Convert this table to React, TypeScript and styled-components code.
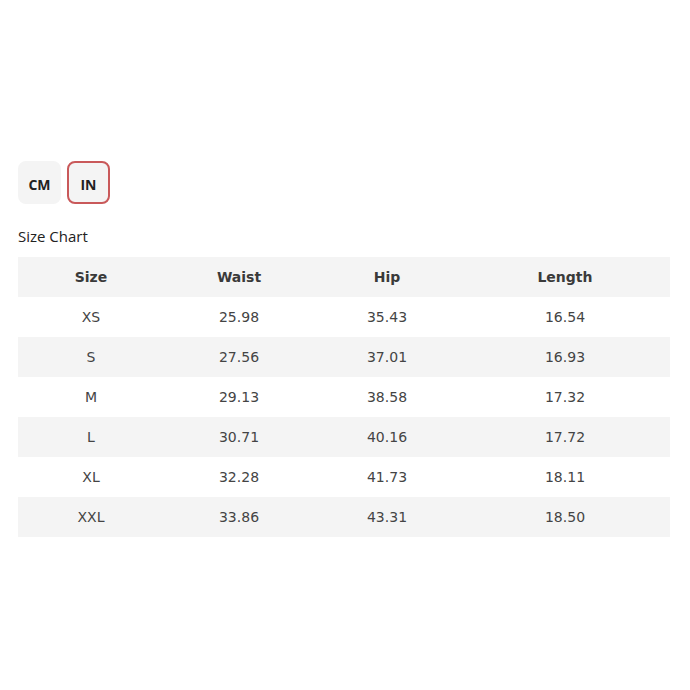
import React from "react";
import styled, { createGlobalStyle } from "styled-components";

const Global = createGlobalStyle`
  html, body { margin: 0; padding: 0; background: #fff; }
`;

const Page = styled.div`
  padding: 161px 20px 0 18px;
  width: 690px;
  box-sizing: border-box;
`;

const UnitRow = styled.div`
  display: flex;
  gap: 6px;
`;

const UnitButton = styled.button<{ $active?: boolean }>`
  width: 43px;
  height: 43px;
  box-sizing: border-box;
  border-radius: 8px;
  border: 2px solid ${(p) => (p.$active ? "#c9595a" : "#f4f4f4")};
  background: #f4f4f4;
  font-family: "Open Sans", sans-serif;
  font-weight: 700;
  font-size: 14px;
  color: #222;
  padding: 3px 0 0;
  display: flex;
  align-items: center;
  justify-content: center;
`;

const Title = styled.div`
  margin-top: 21px;
  font-family: "Open Sans", sans-serif;
  font-size: 15px;
  color: #222;
  line-height: 22px;
  height: 22px;
`;

const Table = styled.div`
  margin-top: 10px;
  width: 652px;
  display: grid;
  grid-template-columns: 146px 150px 146px 210px;
`;

const Row = styled.div<{ $shade?: boolean }>`
  display: contents;
  & > div {
    background: ${(p) => (p.$shade ? "#f4f4f4" : "#fff")};
  }
`;

const Cell = styled.div<{ $head?: boolean }>`
  height: 40px;
  display: flex;
  align-items: center;
  justify-content: center;
  font-family: "DejaVu Sans", Verdana, sans-serif;
  font-size: 14px;
  font-weight: ${(p) => (p.$head ? 700 : 400)};
  color: ${(p) => (p.$head ? "#3a3a3a" : "#444")};
`;

const head = ["Size", "Waist", "Hip", "Length"];
const rows = [
  ["XS", "25.98", "35.43", "16.54"],
  ["S", "27.56", "37.01", "16.93"],
  ["M", "29.13", "38.58", "17.32"],
  ["L", "30.71", "40.16", "17.72"],
  ["XL", "32.28", "41.73", "18.11"],
  ["XXL", "33.86", "43.31", "18.50"],
];

export default function App() {
  return (
    <>
      <Global />
      <Page>
        <UnitRow>
          <UnitButton>CM</UnitButton>
          <UnitButton $active>IN</UnitButton>
        </UnitRow>
        <Title>Size Chart</Title>
        <Table>
          <Row $shade>
            {head.map((h) => (
              <Cell $head key={h}>{h}</Cell>
            ))}
          </Row>
          {rows.map((r, i) => (
            <Row $shade={i % 2 === 1} key={r[0]}>
              {r.map((c, j) => (
                <Cell key={j}>{c}</Cell>
              ))}
            </Row>
          ))}
        </Table>
      </Page>
    </>
  );
}
